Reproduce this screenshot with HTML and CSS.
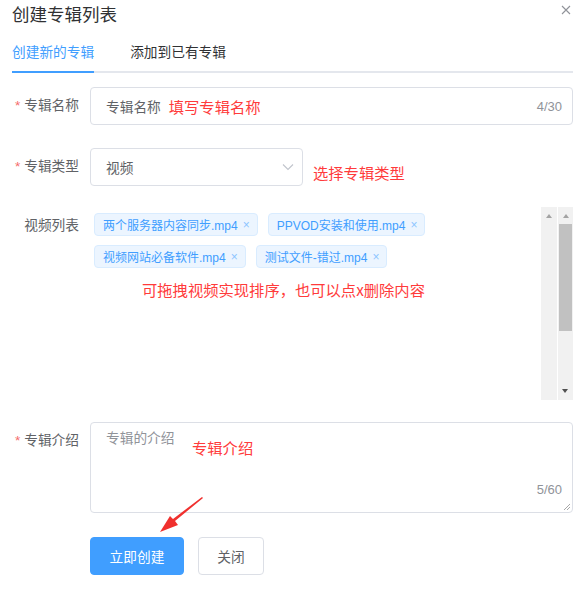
FILE: index.html
```html
<!DOCTYPE html>
<html lang="zh">
<head>
<meta charset="utf-8">
<title>创建专辑列表</title>
<link rel="stylesheet" href="styles.css">
</head>
<body>
<div class="dialog">
  <div class="header">
    <div class="title">创建专辑列表</div>
    <svg class="close" width="10" height="10" viewBox="0 0 10 10"><path d="M1 1L9 9M9 1L1 9" stroke="#909399" stroke-width="1.1" fill="none"/></svg>
  </div>
  <div class="tabs">
    <div class="tab active">创建新的专辑</div>
    <div class="tab">添加到已有专辑</div>
  </div>
  <div class="form">
    <div class="row r1">
      <div class="label"><span class="star">*</span>专辑名称</div>
      <div class="input">
        <span class="val">专辑名称</span><span class="note n1">填写专辑名称</span>
        <span class="count">4/30</span>
      </div>
    </div>
    <div class="row r2">
      <div class="label"><span class="star">*</span>专辑类型</div>
      <div class="select">
        <span class="val">视频</span>
        <svg class="chev" width="12" height="8" viewBox="0 0 12 8"><path d="M1 1.5L6 6.5L11 1.5" stroke="#C0C4CC" stroke-width="1.1" fill="none"/></svg>
      </div>
      <span class="note n2">选择专辑类型</span>
    </div>
    <div class="row r3">
      <div class="label">视频列表</div>
      <div class="listbox">
        <div class="tags">
          <div class="tagrow">
            <span class="tag">两个服务器内容同步.mp4<i>×</i></span>
            <span class="tag">PPVOD安装和使用.mp4<i>×</i></span>
          </div>
          <div class="tagrow">
            <span class="tag">视频网站必备软件.mp4<i>×</i></span>
            <span class="tag">测试文件-错过.mp4<i>×</i></span>
          </div>
          <div class="note n3">可拖拽视频实现排序，也可以点x删除内容</div>
        </div>
        <div class="sb sb1">
          <span class="up light"></span>
        </div>
        <div class="sb sb2">
          <span class="up light"></span>
          <div class="thumb"></div>
          <span class="down"></span>
        </div>
      </div>
    </div>
    <div class="row r4">
      <div class="label"><span class="star">*</span>专辑介绍</div>
      <div class="textarea">
        <span class="ph">专辑的介绍</span>
        <span class="note n4">专辑介绍</span>
        <span class="count tc">5/60</span>
        <svg class="grip" width="8" height="8" viewBox="0 0 8 8"><path d="M7 1L1 7M7 4L4 7" stroke="#A8A8A8" stroke-width="1" fill="none"/></svg>
      </div>
    </div>
    <div class="row r5">
      <div class="label"></div>
      <button class="btn primary">立即创建</button>
      <button class="btn plain">关闭</button>
    </div>
  </div>
  <svg class="arrow" width="50" height="40" viewBox="0 0 50 40"><polygon points="43,1 44,2 16,25 19,29 1,36 11,20 14,23" fill="#F0302E"/></svg>
</div>
</body>
</html>
```
FILE: styles.css
```css
* { box-sizing: border-box; }
body {
  margin: 0;
  background: #fff;
  font-family: "Liberation Sans", "Noto Sans CJK SC", sans-serif;
  color: #606266;
}
.dialog {
  position: relative;
  width: 574px;
  height: 613px;
  padding: 0 1px 0 12px;
}
.header {
  height: 33px;
  padding-top: 3px;
}
.title {
  font-size: 17.5px;
  line-height: 24px;
  color: #303133;
}
.close {
  position: absolute;
  left: 561px;
  top: 5px;
}
.tabs {
  display: flex;
  height: 40px;
  border-bottom: 2px solid #E4E7ED;
}
.tab {
  font-size: 13.7px;
  line-height: 40px;
  color: #303133;
  padding: 0 18px;
  position: relative;
}
.tab:first-child { padding-left: 0; }
.tab.active { color: #409EFF; }
.tab.active::after {
  content: "";
  position: absolute;
  left: 0;
  right: 18px;
  bottom: -2px;
  height: 2px;
  background: #409EFF;
}
.form {
  margin-left: -12px;
  padding-top: 14px;
}
.row {
  display: flex;
  align-items: flex-start;
}
.r1 { margin-bottom: 23px; }
.r2 { margin-bottom: 21px; }
.r3 { margin-bottom: 22px; }
.r4 { margin-bottom: 24px; }
.label {
  width: 90px;
  flex: none;
  text-align: right;
  padding-right: 11px;
  font-size: 13.7px;
  line-height: 38px;
  color: #606266;
}
.star {
  color: #F56C6C;
  margin-right: 4px;
}
.input {
  flex: 1;
  height: 38px;
  border: 1px solid #DCDFE6;
  border-radius: 4px;
  display: flex;
  align-items: center;
  padding: 0 10px 0 15px;
  font-size: 13.7px;
}
.val { color: #606266; }
.note {
  color: #FF3B3B;
  font-size: 15.3px;
  font-family: "Noto Sans CJK SC", sans-serif;
}
.n1 { margin-left: 8px; }
.count {
  margin-left: auto;
  color: #909399;
  font-size: 13px;
}
.select {
  width: 213px;
  height: 38px;
  border: 1px solid #DCDFE6;
  border-radius: 4px;
  display: flex;
  align-items: center;
  padding: 0 8px 0 15px;
  font-size: 13.7px;
}
.chev { margin-left: auto; }
.n2 {
  margin-left: 10px;
  line-height: 24px;
  margin-top: 12px;
}
.listbox {
  flex: 1;
  height: 193px;
  display: flex;
}
.tags {
  flex: 1;
  padding: 6px 0 0 4px;
}
.tagrow {
  display: flex;
  margin-bottom: 9px;
}
.tag {
  display: inline-flex;
  align-items: center;
  height: 23px;
  padding: 0 7px 0 8px;
  margin-right: 10px;
  background: #ECF5FF;
  border: 1px solid #D9ECFF;
  border-radius: 4px;
  color: #409EFF;
  font-size: 12px;
}
.tag i {
  font-style: normal;
  font-size: 12px;
  margin-left: 5px;
  color: #8CC5FF;
}
.n3 {
  margin-left: 48px;
  margin-top: 3px;
  line-height: 24px;
}
.sb {
  height: 193px;
  background: #F1F1F1;
  position: relative;
}
.sb1 { width: 16px; margin-right: 1px; }
.sb2 { width: 15px; }
.up, .down {
  position: absolute;
  left: 50%;
  width: 0;
  height: 0;
  margin-left: -3px;
  border-left: 3px solid transparent;
  border-right: 3px solid transparent;
}
.up { top: 7px; border-bottom: 4px solid #A3A3A3; }
.down { bottom: 7px; border-top: 4px solid #505050; margin-left: -3.5px; border-left-width: 3.5px; border-right-width: 3.5px; }
.thumb {
  position: absolute;
  left: 1px;
  right: 1px;
  top: 17px;
  height: 107px;
  background: #C1C1C1;
}
.textarea {
  flex: 1;
  height: 91px;
  border: 1px solid #DCDFE6;
  border-radius: 4px;
  position: relative;
  padding: 6px 15px;
  font-size: 13.7px;
  line-height: 20px;
}
.ph { color: #909399; }
.n4 {
  position: absolute;
  left: 101px;
  top: 12px;
  line-height: 24px;
}
.tc {
  position: absolute;
  right: 10px;
  bottom: 14px;
  line-height: 16px;
}
.grip {
  position: absolute;
  right: 1px;
  bottom: 1px;
}
.btn {
  height: 38px;
  border-radius: 4px;
  font-size: 13.7px;
  font-family: "Noto Sans CJK SC", sans-serif;
  cursor: pointer;
}
.primary {
  width: 94px;
  background: #409EFF;
  border: 1px solid #409EFF;
  color: #fff;
}
.plain {
  width: 66px;
  margin-left: 14px;
  background: #fff;
  border: 1px solid #DCDFE6;
  color: #606266;
}
.arrow {
  position: absolute;
  left: 159px;
  top: 496px;
}
```
